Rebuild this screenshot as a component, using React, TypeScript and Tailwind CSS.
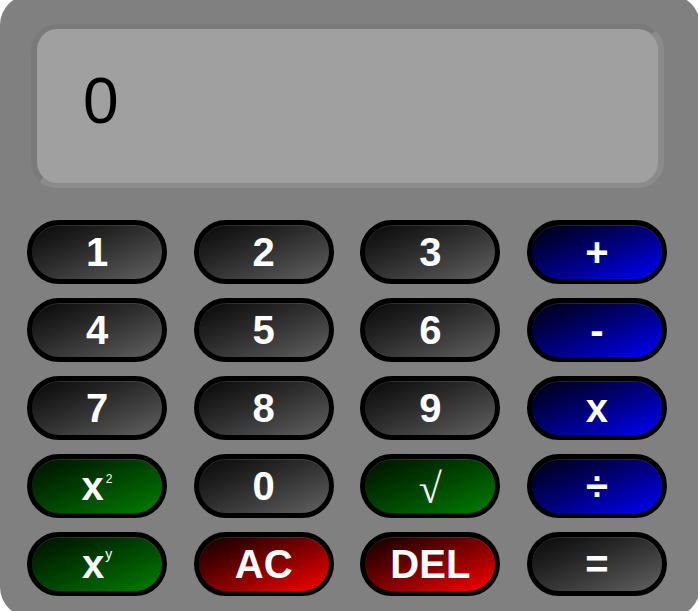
const keys: { label: React.ReactNode; tone: "black" | "blue" | "green" | "red" }[] = [
  { label: "1", tone: "black" },
  { label: "2", tone: "black" },
  { label: "3", tone: "black" },
  { label: "+", tone: "blue" },
  { label: "4", tone: "black" },
  { label: "5", tone: "black" },
  { label: "6", tone: "black" },
  { label: "-", tone: "blue" },
  { label: "7", tone: "black" },
  { label: "8", tone: "black" },
  { label: "9", tone: "black" },
  { label: "x", tone: "blue" },
  {
    label: (
      <span className="flex items-start">
        x<span className="ml-[2px] mt-[7px] text-[12px] font-normal leading-none">2</span>
      </span>
    ),
    tone: "green",
  },
  { label: "0", tone: "black" },
  {
    label: <span className="mt-[6px] font-['Liberation_Serif',serif] font-normal text-[42px]">√</span>,
    tone: "green",
  },
  { label: "÷", tone: "blue" },
  {
    label: (
      <span className="flex items-start">
        x<span className="ml-[1px] mt-[3px] text-[14px] font-normal leading-none">y</span>
      </span>
    ),
    tone: "green",
  },
  { label: "AC", tone: "red" },
  { label: "DEL", tone: "red" },
  { label: "=", tone: "black" },
];

const toneClasses = {
  black: "from-[#080808] to-[#626262]",
  blue: "from-[#000010] to-[#0000ff]",
  green: "from-[#001000] to-[#008000]",
  red: "from-[#100000] to-[#ff0000]",
};

function Key({ label, tone }: { label: React.ReactNode; tone: keyof typeof toneClasses }) {
  return (
    <button
      className={`h-[64px] rounded-full border-[5px] border-black bg-linear-to-br ${toneClasses[tone]} shadow-[inset_0_1px_0_rgba(255,255,255,0.12)] flex items-center justify-center text-white font-bold text-[40px] leading-none font-['Liberation_Sans',Arial,sans-serif]`}
    >
      {label}
    </button>
  );
}

export default function App() {
  return (
    <div className="h-[611px] w-full overflow-hidden bg-white">
      <div className="-mt-[5px] h-[622px] w-[700px] rounded-[30px] bg-[#808080] pt-[29px]">
        {/* display */}
        <div className="ml-[31px] h-[164px] w-[633px] rounded-[26px] border-x-[6px] border-y-[5px] border-t-[#7a7a7a] border-l-[#7a7a7a] border-b-[#8b8b8b] border-r-[#8b8b8b] bg-[#a0a0a0]">
          <div className="pl-[46px] pt-[40px] text-[64px] leading-none text-black font-['Liberation_Sans',Arial,sans-serif]">
            0
          </div>
        </div>

        {/* keypad */}
        <div className="ml-[27px] mt-[32px] grid w-[640px] grid-cols-4 gap-x-[26.67px] gap-y-[14px]">
          {keys.map((k, i) => (
            <Key key={i} label={k.label} tone={k.tone} />
          ))}
        </div>
      </div>
    </div>
  );
}
